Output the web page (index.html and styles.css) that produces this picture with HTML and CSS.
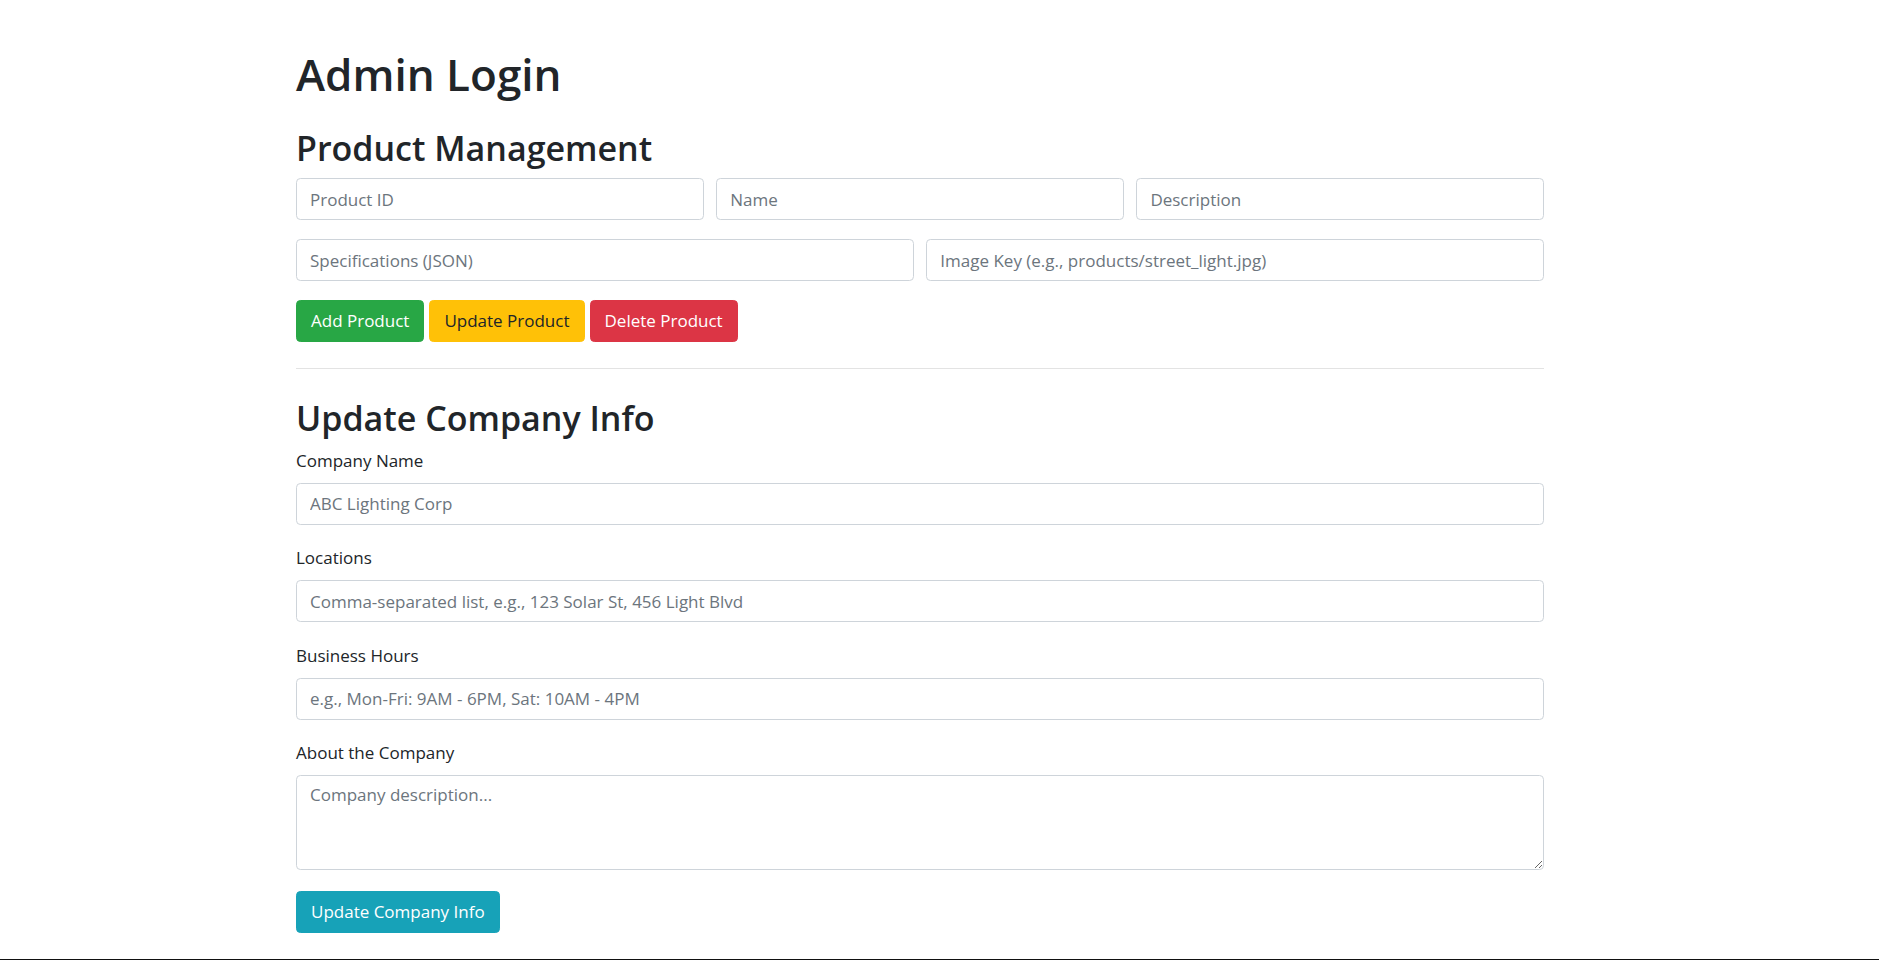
FILE: index.html
```html
<!DOCTYPE html>
<html lang="en">
<head>
<meta charset="utf-8">
<title>Admin Login</title>
<link rel="stylesheet" href="styles.css">
</head>
<body>
<div class="page">
  <div class="container">
    <h1 class="title">Admin Login</h1>

    <h2 class="section-title">Product Management</h2>
    <div class="row row-3">
      <input class="control" type="text" placeholder="Product ID">
      <input class="control" type="text" placeholder="Name">
      <input class="control" type="text" placeholder="Description">
    </div>
    <div class="row row-2">
      <input class="control" type="text" placeholder="Specifications (JSON)">
      <input class="control" type="text" placeholder="Image Key (e.g., products/street_light.jpg)">
    </div>
    <div class="btn-row">
      <button class="btn btn-success">Add Product</button>
      <button class="btn btn-warning">Update Product</button>
      <button class="btn btn-danger">Delete Product</button>
    </div>

    <hr class="divider">

    <h2 class="section-title second">Update Company Info</h2>
    <div class="field">
      <label class="label">Company Name</label>
      <input class="control" type="text" placeholder="ABC Lighting Corp">
    </div>
    <div class="field">
      <label class="label">Locations</label>
      <input class="control" type="text" placeholder="Comma-separated list, e.g., 123 Solar St, 456 Light Blvd">
    </div>
    <div class="field">
      <label class="label">Business Hours</label>
      <input class="control" type="text" placeholder="e.g., Mon-Fri: 9AM - 6PM, Sat: 10AM - 4PM">
    </div>
    <div class="field">
      <label class="label">About the Company</label>
      <textarea class="control area" placeholder="Company description..."></textarea>
    </div>
    <button class="btn btn-info">Update Company Info</button>
  </div>
</div>
</body>
</html>
```

FILE: styles.css
```css
* { box-sizing: border-box; }

html, body {
  margin: 0;
  padding: 0;
  background: #fff;
}

body {
  font-family: "Open Sans", "Noto Sans", sans-serif;
  font-size: 17px;
  line-height: 1.5;
  color: #212529;
}

.page {
  min-height: 100vh;
  border-bottom: 1px solid #111;
}

.container {
  width: 1248px;
  margin-left: 296px;
  padding-top: 48px;
}

.title {
  margin: 0 0 27.5px;
  font-size: 44px;
  line-height: 1.2;
  font-weight: 600;
}

.section-title {
  margin: 0 0 9px;
  font-size: 34px;
  line-height: 1.2;
  font-weight: 600;
}

.section-title.second {
  margin-top: 29px;
  margin-bottom: 9px;
}

.row {
  display: grid;
  gap: 12.6px;
  margin-bottom: 19px;
}

.row-3 { grid-template-columns: repeat(3, 1fr); }
.row-2 { grid-template-columns: repeat(2, 1fr); }

.control {
  display: block;
  width: 100%;
  height: 42px;
  padding: 0 13px;
  font-family: inherit;
  font-size: 17px;
  color: #495057;
  background: #fff;
  border: 1px solid #ced4da;
  border-radius: 4.4px;
  outline: none;
}

.control::placeholder {
  color: #6c757d;
  opacity: 1;
}

.area {
  height: 95px;
  padding: 6px 13px;
  line-height: 1.5;
  resize: vertical;
}

.btn-row {
  display: flex;
  gap: 5px;
}

.btn {
  display: inline-block;
  height: 42px;
  padding: 0 14px;
  font-family: inherit;
  font-size: 17px;
  line-height: 40px;
  border: 1px solid transparent;
  border-radius: 4.4px;
  cursor: pointer;
}

.btn-success { background: #28a745; border-color: #28a745; color: #fff; }
.btn-warning { background: #ffc107; border-color: #ffc107; color: #212529; }
.btn-danger  { background: #dc3545; border-color: #dc3545; color: #fff; }
.btn-info    { background: #17a2b8; border-color: #17a2b8; color: #fff; }

.divider {
  margin: 26px 0 0;
  border: 0;
  border-top: 1px solid #e3e3e3;
}

.field {
  margin-bottom: 20.5px;
}

.label {
  display: block;
  line-height: 25.5px;
  margin-bottom: 9.5px;
}
```
